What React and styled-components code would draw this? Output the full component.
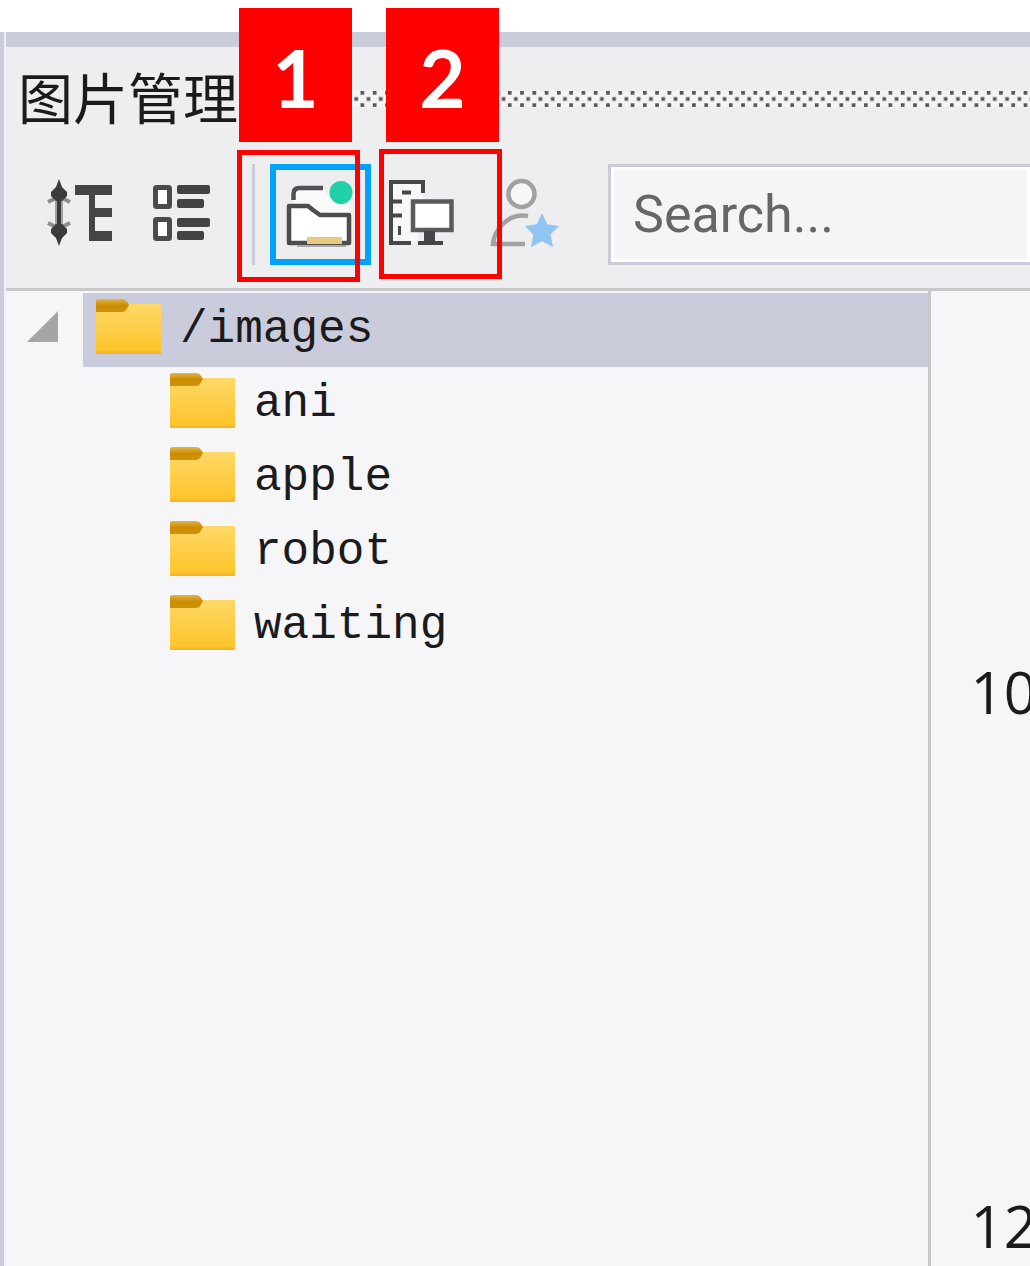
import React from 'react';
import styled, { createGlobalStyle } from 'styled-components';

const Global = createGlobalStyle`
  * { box-sizing: border-box; }
  body { margin: 0; background: #fff; overflow: hidden; }
  button { font: inherit; color: inherit; border: 0; padding: 0; background: none; }
`;

const sans = '"Open Sans", "Noto Sans CJK SC", sans-serif';

const Page = styled.div`
  position: relative;
  min-height: 100vh;
  padding-top: 32px;
  font-family: ${sans};
  color: #1b1b1d;
`;

const Panel = styled.main`
  display: flex;
  flex-direction: column;
  min-height: calc(100vh - 32px);
  border-left: 4px solid #cbccdb;
  padding-left: 2px;
  background: #f0f0f6;
`;

const Accent = styled.div`
  height: 15px;
  background: #cbccdb;
`;

const TitleBar = styled.header`
  display: flex;
  align-items: center;
  gap: 12px;
  height: 103px;
  padding-left: 12px;
  background: #eeeef0;
`;

const Title = styled.h1`
  margin: 0;
  padding-bottom: 8px;
  flex: none;
  font: 400 55px/80px "Noto Sans CJK SC", sans-serif;
`;

const Grip = styled.svg`
  flex: 1;
  min-width: 0;
  height: 16px;
`;

const Toolbar = styled.div`
  display: flex;
  padding: 14px 0 23px 24px;
  background: #eeeef0;
  border-bottom: 3px solid #c9c9cb;
`;

const ToolButton = styled.button`
  flex: none;
  width: 101px;
  height: 101px;
  box-shadow: ${(p) => (p.$active ? 'inset 0 0 0 6px #00a2ff' : 'none')};

  svg { display: block; }
`;

const Divider = styled.div`
  width: 3px;
  margin: 0 15px 0 20px;
  background: #cbccd8;
`;

const SearchBox = styled.input`
  flex: 1;
  min-width: 0;
  height: 101px;
  margin-left: 35px;
  padding: 0 22px;
  border: 3px solid #cbccdb;
  border-right: 0;
  border-radius: 0;
  outline: 0;
  background: #f5f5f8;
  box-shadow: inset 0 0 0 3px #fff;
  font: 400 52px/80px Roboto, sans-serif;

  &::placeholder { color: #666; opacity: 1; }
`;

const Body = styled.div`
  flex: 1;
  display: grid;
  grid-template-columns: minmax(0, 9fr) minmax(0, 1fr);
  background: #f6f6f9;
`;

const Tree = styled.ul`
  margin: 0;
  padding: 2px 0 0;
  list-style: none;

  svg { flex: none; margin-bottom: 7px; }
`;

const TreeItem = styled.li`
  display: flex;
  height: 74px;
  padding-left: ${(p) => p.$level * 74}px;
`;

const Toggle = styled.button`
  flex: none;
  display: flex;
  align-items: center;
  width: 77px;
  padding-left: 20px;
`;

const Entry = styled.button`
  flex: 1;
  display: flex;
  align-items: center;
  gap: 18px;
  padding-left: 11px;
  text-align: left;
  background: ${(p) => (p.$selected ? '#cbccdb' : 'transparent')};
  font: 400 46px/60px "Liberation Mono", monospace;
`;

const Spacer = styled.span`
  flex: none;
  width: 77px;
`;

const Preview = styled.section`
  display: flex;
  flex-direction: column;
  gap: 454px;
  overflow: hidden;
  padding: 361px 0 0 40px;
  border-left: 3px solid #c9c9cb;
`;

const Caption = styled.p`
  margin: 0;
  font-size: 58px;
  line-height: 80px;
  white-space: nowrap;
`;

const Badge = styled.div`
  position: absolute;
  left: ${(p) => p.$x}px;
  top: 8px;
  width: 113px;
  height: 134px;
  background: #f00;
  color: #fff;
  text-align: center;
  font: 700 80px/138px Lato, sans-serif;
`;

const Outline = styled.div`
  position: absolute;
  left: ${(p) => p.$x}px;
  top: ${(p) => p.$y}px;
  width: 123px;
  height: ${(p) => p.$h}px;
  border: 5px solid #f00;
  pointer-events: none;
`;

const Icon = ({ children }) => (
  <svg width="101" height="101" viewBox="0 0 101 101" fill="none" aria-hidden="true">{children}</svg>
);

const ExpandIcon = () => (
  <Icon>
    <path d="M18 38l8-4M40 38l-8-4M18 59l8 4M40 59l-8 4" stroke="#8d8d8d" strokeWidth="4" />
    <path d="M26.500 36v25M31.500 36v25" stroke="#a2a2a2" strokeWidth="3" />
    <g fill="#3b3b3d">
      <path d="M29 15l3 8 5 5v4l-5 5h-6l-5-5v-4l5-5zM29 82l3-8 5-5v-4l-5-5h-6l-5 5v4l5 5z" />
      <path d="M27 34h4v29h-4z" />
    </g>
    <path d="M45 21h37v10H65v13h17v9H65v14h17v10H59V31H45z" fill="#454547" />
  </Icon>
);

const ListIcon = () => (
  <Icon>
    <g fill="#fff" stroke="#4b4b4d" strokeWidth="5">
      <rect x="24.5" y="23.5" width="14" height="19" rx="1" />
      <rect x="24.5" y="55.5" width="14" height="19" rx="1" />
    </g>
    <g fill="#434345">
      <rect x="46" y="21" width="33" height="9" rx="2" />
      <rect x="46" y="35" width="27" height="9" rx="2" />
      <rect x="46" y="54" width="33" height="9" rx="2" />
      <rect x="46" y="67" width="27" height="9" rx="2" />
    </g>
  </Icon>
);

const FoldersIcon = () => (
  <Icon>
    <path d="M23 40V30l5-6h26l6 12h19v14H50z" fill="#fafafb" />
    <path d="M23.500 36v-6q0-6 6-6H53" stroke="#515153" strokeWidth="4.500" />
    <path d="M19 42h19l5 4 7 5h29v28H19z" fill="#fff" stroke="#4d4d4f" strokeWidth="4.500" strokeLinejoin="round" />
    <path d="M37 73h35v7H37z" fill="#e8ca7f" />
    <path d="M27 82h49" stroke="#aaaaac" strokeWidth="2" />
    <circle cx="71" cy="28.500" r="11.500" fill="#21d0a8" />
  </Icon>
);

const ComputerIcon = () => (
  <Icon>
    <path d="M20 18h32v18H42v30h5v13H20z" fill="#f8f8fa" />
    <path d="M52 29V18H20v61h20M22 37.500h9M22 51.500h9M31 28.500h9" stroke="#474749" strokeWidth="4" />
    <path d="M28.500 62v9" stroke="#474749" strokeWidth="3" />
    <rect x="42" y="37.500" width="38.500" height="28.500" fill="#fff" stroke="#5b5b5d" strokeWidth="4.500" />
    <path d="M53 67h11v10h8v4H47v-4h6z" fill="#464648" />
  </Icon>
);

const UserStarIcon = () => (
  <Icon>
    <circle cx="49.500" cy="30" r="13" fill="#f7f7f9" stroke="#a1a1a3" strokeWidth="4.500" />
    <path d="M56 52Q41 49 30 61q-8 8-9 19h32" fill="none" stroke="#a1a1a3" strokeWidth="4.500" />
    <path d="M70 49l5.300 11.200L87 62l-8.500 8.500L81 83l-11-5.800L59 83l2.300-12.500L53 62l11.800-1.800z" fill="#8fc4f3" />
  </Icon>
);

const FolderIcon = () => (
  <svg width="68" height="58" viewBox="0 0 68 58" aria-hidden="true">
    <defs>
      <linearGradient id="folder" x1="0" y1="0" x2="0" y2="1">
        <stop offset="0" stopColor="#ffd868" />
        <stop offset="0.920" stopColor="#fec52c" />
        <stop offset="1" stopColor="#eeb32b" />
      </linearGradient>
      <linearGradient id="tab" x1="0" y1="0" x2="0" y2="1">
        <stop offset="0" stopColor="#e3b449" />
        <stop offset="0.500" stopColor="#cc8c00" />
        <stop offset="1" stopColor="#cf9208" />
      </linearGradient>
    </defs>
    <rect x="2" y="6" width="65" height="50" rx="1" fill="url(#folder)" />
    <path d="M2 3q0-2 2-2h25q3 0 6 6l-3 5q-1 2-4 2H2z" fill="url(#tab)" />
  </svg>
);

const folders = ['ani', 'apple', 'robot', 'waiting'];

export default function App() {
  return (
    <Page>
      <Global />
      <Panel>
        <Accent />
        <TitleBar>
          <Title>图片管理</Title>
          <Grip aria-hidden="true">
            <defs>
              <pattern id="dots" width="4" height="4" patternUnits="userSpaceOnUse" patternTransform="scale(3.07)">
                <rect width="4" height="4" fill="#f4f4f6" />
                <rect width="1.200" height="1.200" fill="#58585a" />
                <rect x="2" y="2" width="1.200" height="1.200" fill="#58585a" />
              </pattern>
            </defs>
            <rect width="100%" height="100%" fill="url(#dots)" />
          </Grip>
        </TitleBar>
        <Toolbar role="toolbar">
          <ToolButton aria-label="Expand tree"><ExpandIcon /></ToolButton>
          <ToolButton aria-label="List view"><ListIcon /></ToolButton>
          <Divider />
          <ToolButton $active aria-pressed="true" aria-label="Project folders"><FoldersIcon /></ToolButton>
          <ToolButton aria-label="Computer"><ComputerIcon /></ToolButton>
          <ToolButton aria-label="Favourites"><UserStarIcon /></ToolButton>
          <SearchBox type="text" aria-label="Search" placeholder="Search..." />
        </Toolbar>
        <Body>
          <Tree>
            <TreeItem $level={0}>
              <Toggle aria-label="Collapse" aria-expanded="true">
                <svg width="33" height="33" viewBox="0 0 33 33" aria-hidden="true">
                  <path d="M1 32L32 1v31z" fill="#a5a5a7" />
                </svg>
              </Toggle>
              <Entry $selected><FolderIcon />/images</Entry>
            </TreeItem>
            {folders.map((name) => (
              <TreeItem key={name} $level={1}>
                <Spacer />
                <Entry><FolderIcon />{name}</Entry>
              </TreeItem>
            ))}
          </Tree>
          <Preview>
            <Caption>10</Caption>
            <Caption>12</Caption>
          </Preview>
        </Body>
      </Panel>
      <Badge $x={239}>1</Badge>
      <Badge $x={386}>2</Badge>
      <Outline $x={237} $y={150} $h={132} />
      <Outline $x={379} $y={149} $h={130} />
    </Page>
  );
}
